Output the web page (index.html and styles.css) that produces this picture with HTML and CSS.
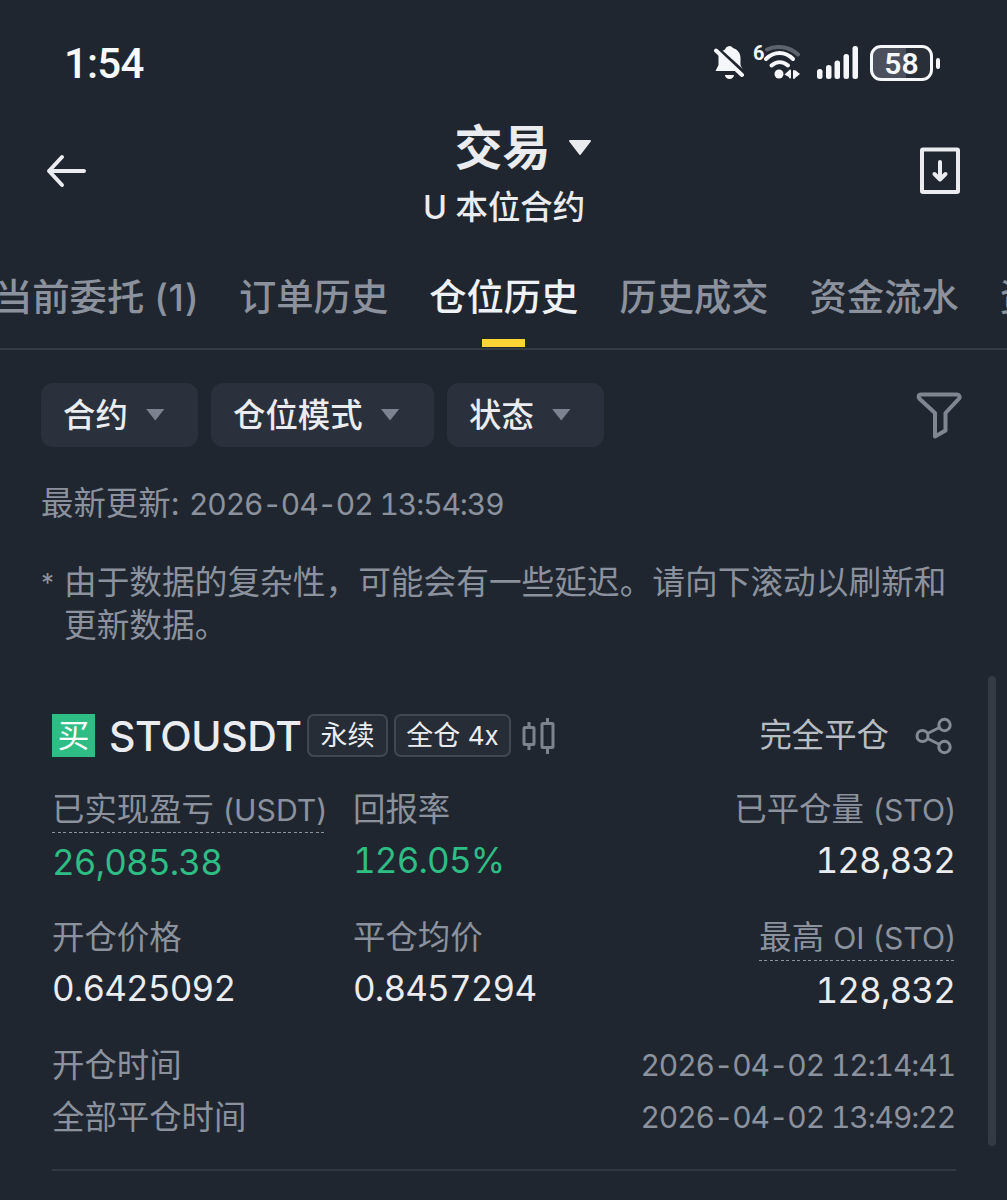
FILE: index.html
```
<!DOCTYPE html>
<html lang="zh-CN">
<head>
    <meta charset="UTF-8">
    <meta name="viewport" content="width=device-width, initial-scale=1.0">
    <title>仓位历史</title>
    <link rel="stylesheet" href="styles.css">
</head>
<body>
    <div class="status-bar">
        <span class="clock">1:54</span>
        <div class="status-icons">
            <svg class="icon-bell" width="32" height="36" viewBox="0 0 32 36">
                <path d="M11 4.500a4.500 4.500 0 0 1 8-1.500c5 1.500 7.500 5.500 7.500 10v7l3 6H1.500l3-6V11c0-2 3-5 6.500-6.500z" fill="#f5f7fa"/>
                <path d="M11 30h9a4.500 4 0 0 1-9 0z" fill="#f5f7fa"/>
                <path d="M1 2l31 28" stroke="#20262f" stroke-width="5"/>
                <path d="M2 5.500l26 24.500" stroke="#f5f7fa" stroke-width="4" stroke-linecap="round"/>
            </svg>
            <div class="wifi">
                <span class="wifi-gen">6</span>
                <svg width="38" height="36" viewBox="0 0 38 36" fill="none" stroke="#f5f7fa" stroke-width="4" stroke-linecap="round">
                    <path d="M4 4.500C14 0 26 1.500 35 9.500" stroke="#5d636d"/>
                    <path d="M3 14C11 6 22 6 30 14"/>
                    <path d="M8.500 20.500C13.500 16 20 16 25 20.500"/>
                    <circle cx="16" cy="29" r="4.500" fill="#f5f7fa" stroke="none"/>
                    <path d="M21.500 29.500l6-5.500v9zM37 29l-5-4v8z" fill="#f5f7fa" stroke="none"/>
                    <path d="M27 26v6.500M31 26v7" stroke-width="2"/>
                </svg>
            </div>
            <svg class="icon-signal" width="42" height="36" viewBox="0 0 42 36" fill="#f5f7fa">
                <rect x="0" y="24" width="5.500" height="10" rx="2.500"/>
                <rect x="9" y="20" width="5.500" height="14" rx="2.500"/>
                <rect x="17.500" y="15.500" width="5.500" height="18.500" rx="2.500"/>
                <rect x="26.500" y="9" width="5.500" height="25" rx="2.500"/>
                <rect x="35.500" y="1" width="5.500" height="33" rx="2.500"/>
            </svg>
            <div class="battery"><span>58</span></div>
            <i class="battery-tip"></i>
        </div>
    </div>

    <header class="header">
        <svg width="42" height="34" viewBox="0 0 42 34" fill="none" stroke="#eaecef" stroke-width="4" stroke-linecap="round" stroke-linejoin="round">
            <path d="M17 3L4 17l13 14M5 17h34"/>
        </svg>
        <div class="header-title">
            <h1>交易<svg width="26" height="18" viewBox="0 0 26 18"><path d="M3 2h20L13 15z" fill="#eaecef" stroke="#eaecef" stroke-width="2" stroke-linejoin="round"/></svg></h1>
            <p>U 本位合约</p>
        </div>
        <svg width="42" height="48" viewBox="0 0 42 48" fill="none" stroke="#eaecef" stroke-width="4" stroke-linecap="round" stroke-linejoin="round">
            <rect x="3" y="2.500" width="36" height="42.500" rx="1"/>
            <path d="M21 15v17M15.500 27l5.500 5.500 5.500-5.500"/>
        </svg>
    </header>

    <nav class="tabs">
        <a class="tab tab-first">当前委托 <span>(1)</span></a>
        <a class="tab">订单历史</a>
        <a class="tab active">仓位历史</a>
        <a class="tab">历史成交</a>
        <a class="tab">资金流水</a>
        <a class="tab">资金费用</a>
    </nav>

    <div class="filters">
        <button class="chip">合约<i class="caret"></i></button>
        <button class="chip chip-wide">仓位模式<i class="caret"></i></button>
        <button class="chip">状态<i class="caret"></i></button>
        <svg class="icon-filter" width="46" height="50" viewBox="0 0 46 50" fill="none" stroke="#7f8692" stroke-width="4" stroke-linejoin="round">
            <path d="M5 3.500h36c2.500 0 3.300 2.500 2 4.200L29.500 22v17.500l-10.500 6V22L3.500 7.700C2 6 2.500 3.500 5 3.500z"/>
        </svg>
    </div>

    <p class="updated">最新更新: <span class="date">2026-04-02 13:54:39</span></p>
    <div class="notice">
        <span>*</span>
        <p>由于数据的复杂性，可能会有一些延迟。请向下滚动以刷新和更新数据。</p>
    </div>

    <main class="position">
        <div class="position-head">
            <span class="side">买</span>
            <span class="symbol">STOUSDT</span>
            <span class="tag">永续</span>
            <span class="tag tag-wide">全仓 <small>4x</small></span>
            <svg width="34" height="36" viewBox="0 0 34 36" fill="none" stroke="#7c838f" stroke-width="3">
                <rect x="2" y="9.500" width="10" height="17" rx="1"/>
                <path d="M7 4v5M7 27v5M25.500 0v5M25.500 30v6"/>
                <rect x="20" y="5.500" width="11" height="24" rx="1"/>
            </svg>
            <span class="state">完全平仓</span>
            <svg width="38" height="38" viewBox="0 0 38 38" fill="none" stroke="#848b97" stroke-width="3">
                <circle cx="7.500" cy="19" r="5.500"/>
                <circle cx="29.500" cy="8" r="5.700"/>
                <circle cx="29.500" cy="30" r="5.700"/>
                <path d="M12.500 16.500l12-6M12.500 21.500l12 6"/>
            </svg>
        </div>

        <div class="grid">
            <div class="cell">
                <div class="label dotted">已实现盈亏 <span>(USDT)</span></div>
                <div class="value green low">26,085.38</div>
            </div>
            <div class="cell">
                <div class="label">回报率</div>
                <div class="value green">126.05%</div>
            </div>
            <div class="cell right">
                <div class="label">已平仓量 <span>(STO)</span></div>
                <div class="value">128,832</div>
            </div>
            <div class="cell">
                <div class="label">开仓价格</div>
                <div class="value">0.6425092</div>
            </div>
            <div class="cell">
                <div class="label">平仓均价</div>
                <div class="value">0.8457294</div>
            </div>
            <div class="cell right">
                <div class="label dotted">最高 <span>OI (STO)</span></div>
                <div class="value low">128,832</div>
            </div>
        </div>

        <div class="times">
            <div class="time-row"><span>开仓时间</span><span class="date">2026-04-02 12:14:41</span></div>
            <div class="time-row"><span>全部平仓时间</span><span class="date">2026-04-02 13:49:22</span></div>
        </div>
    </main>
    <div class="scrollbar"></div>
</body>
</html>
```
FILE: styles.css
```
* {
    box-sizing: border-box;
}

body {
    margin: 0;
    height: 1200px;
    position: relative;
    overflow: hidden;
    background: #20262f;
    color: #eaecef;
    font-family: "Inter", "Noto Sans CJK SC", sans-serif;
    font-size: 32.4px;
}

h1, p {
    margin: 0;
}

svg {
    flex: none;
    display: block;
}

/* status bar */
.status-bar {
    display: flex;
    justify-content: space-between;
    align-items: center;
    height: 106px;
    padding: 20px 67px 0 64px;
}

.clock {
    font-family: "Roboto", sans-serif;
    font-size: 42px;
    font-weight: 500;
    letter-spacing: -0.8px;
    color: #f8fafc;
}

.status-icons {
    display: flex;
    align-items: center;
}

.wifi {
    display: flex;
    margin-left: 7px;
}

.wifi-gen {
    width: 10px;
    font: 700 20px/17px "Roboto", sans-serif;
    color: #f5f7fa;
}

.icon-signal {
    margin-left: 16px;
}

.battery {
    width: 63px;
    height: 36px;
    margin-left: 11px;
    border: 3px solid #f5f7fa;
    border-radius: 11px;
    background: linear-gradient(90deg, #4b505c 58%, #292f38 58%);
    text-align: center;
    font: 600 30px/31px "Roboto", sans-serif;
    color: #f5f7fa;
}

.battery-tip {
    width: 4px;
    height: 11px;
    margin-left: 3px;
    border-radius: 2px;
    background: #f5f7fa;
}

/* header */
.header {
    display: flex;
    justify-content: space-between;
    height: 142px;
    padding: 16px 46px 0 45px;
}

.header > svg:first-child {
    margin-top: 32px;
}

.header > svg:last-child {
    margin-top: 25px;
}

.header-title {
    width: 200px;
    padding-left: 2px;
    text-align: center;
}

.header h1 {
    display: flex;
    align-items: center;
    justify-content: center;
    gap: 16px;
    padding-left: 39px;
    font-size: 48px;
    font-weight: 700;
    line-height: 52px;
}

.header p {
    margin-top: 6px;
    font-weight: 500;
    line-height: 55px;
    white-space: nowrap;
}

/* tabs */
.tabs {
    display: flex;
    gap: 41px;
    height: 102px;
    margin-left: -4px;
    border-bottom: 2px solid #343b44;
    white-space: nowrap;
}

.tab {
    flex: none;
    position: relative;
    font-size: 37.3px;
    font-weight: 500;
    line-height: 99px;
    color: #8b929e;
}

.tab-first {
    width: 202px;
    text-indent: -1px;
}

.tab-first span {
    font-size: 37px;
    letter-spacing: 0.8px;
}

.tab.active {
    color: #eef1f5;
}

.tab.active::after {
    content: "";
    position: absolute;
    left: 53px;
    bottom: 1px;
    width: 43px;
    height: 8px;
    background: #fcd535;
}

/* filters */
.filters {
    display: flex;
    gap: 13px;
    padding: 33px 45px 0 41px;
}

.chip {
    display: flex;
    align-items: center;
    gap: 18px;
    width: 157px;
    height: 64px;
    padding: 0 0 6px 22px;
    border: 0;
    border-radius: 12px;
    background: #2a313c;
    color: #eaecef;
    font-family: inherit;
    font-size: 32.4px;
    font-weight: 500;
}

.chip-wide {
    width: 223px;
}

.caret {
    width: 19px;
    height: 12px;
    margin-top: 5px;
    background: #7c8290;
    clip-path: polygon(0 0, 100% 0, 50% 100%);
}

.icon-filter {
    margin: 8px 0 0 auto;
}

.updated {
    margin: 35px 0 0 41px;
    line-height: 43px;
    color: #8b929e;
}

.date {
    font-size: 30px;
    font-feature-settings: "tnum";
    letter-spacing: -1.1px;
}

.notice {
    display: flex;
    margin-top: 35px;
    padding: 0 50px 0 41px;
    line-height: 43px;
    color: #8b929e;
}

.notice span {
    width: 23px;
    font-size: 26px;
}

.notice p {
    flex: none;
    width: 890px;
    font-size: 32.7px;
}

/* position */
.position {
    margin: 67px 51px 0 52px;
    border-bottom: 2px solid #323841;
    height: 457px;
}

.position-head {
    display: flex;
    align-items: center;
    height: 43px;
}

.side {
    width: 43px;
    height: 43px;
    background: #2ebd85;
    color: #fff;
    font-size: 32px;
    line-height: 43px;
    text-align: center;
}

.symbol {
    width: 198px;
    margin-left: 14px;
    font-size: 41px;
    font-weight: 500;
    letter-spacing: -0.4px;
}

.tag {
    width: 81px;
    height: 43px;
    border: 2px solid #414853;
    border-radius: 7px;
    background: #272d37;
    font-size: 27px;
    line-height: 40px;
    text-align: center;
    white-space: nowrap;
}

.tag small {
    font-size: 26px;
}

.tag-wide {
    width: 117px;
    margin: 0 11px 0 6px;
}

.state {
    margin: 0 26px 0 auto;
    line-height: 45px;
    color: #b7bdc3;
}

.position-head svg:last-child {
    margin-right: 3px;
}

.grid {
    display: grid;
    grid-template-columns: 301px 270px 1fr;
    grid-auto-rows: 128px;
    margin-top: 29px;
}

.cell {
    display: flex;
    flex-direction: column;
    align-items: flex-start;
    white-space: nowrap;
}

.right {
    align-items: flex-end;
}

.label {
    height: 47px;
    line-height: 47px;
    color: #8b929e;
}

.label span {
    font-size: 30.2px;
}

.dotted {
    background: repeating-linear-gradient(90deg, #8b929e 0 3px, transparent 3px 5.500px) 0 100% / 100% 1.500px no-repeat;
}

.value {
    margin-top: 5px;
    font-size: 35px;
    line-height: 44px;
    font-feature-settings: "tnum";
    letter-spacing: -0.85px;
}

.right .value {
    margin-right: 1px;
}

.low {
    margin-top: 7px;
}

.green {
    color: #2ebd85;
}

.times {
    color: #8b929e;
}

.time-row {
    display: flex;
    justify-content: space-between;
    height: 52px;
    padding-right: 1px;
    line-height: 47px;
}

.scrollbar {
    position: absolute;
    top: 676px;
    right: 11px;
    width: 8px;
    height: 470px;
    border-radius: 4px;
    background: #353b45;
}
```
